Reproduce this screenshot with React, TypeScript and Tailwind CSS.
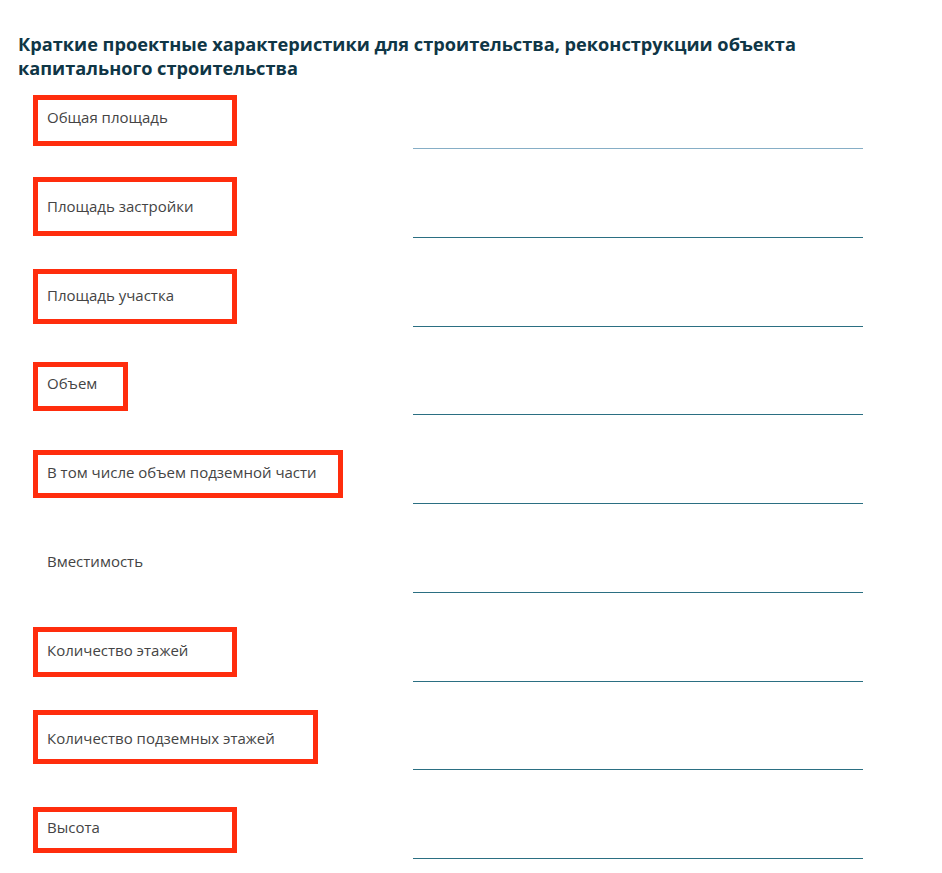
const ROWS = [
  { label: 'Общая площадь', box: 'top-[3px] h-[51px] w-[204px]', line: 'border-[#86aec6]' },
  { label: 'Площадь застройки', box: 'top-[-4px] h-[59px] w-[204px]', line: 'border-[#2b6f82]' },
  { label: 'Площадь участка', box: 'top-[-1px] h-[55px] w-[204px]', line: 'border-[#2b6f82]' },
  { label: 'Объем', box: 'top-[4px] h-[49px] w-[95px]', line: 'border-[#2b6f82]' },
  { label: 'В том числе объем подземной части', box: 'top-[3px] h-[48px] w-[310px]', line: 'border-[#2b6f82]' },
  { label: 'Вместимость', box: '', line: 'border-[#2b6f82]' },
  { label: 'Количество этажей', box: 'top-[2px] h-[50px] w-[204px]', line: 'border-[#2b6f82]' },
  { label: 'Количество подземных этажей', box: 'top-[-3px] h-[54px] w-[285px]', line: 'border-[#2b6f82]' },
  { label: 'Высота', box: 'top-[5px] h-[46px] w-[204px]', line: 'border-[#2b6f82]' },
]

export default function App() {
  return (
    <div className="h-[873px] w-[942px] overflow-hidden bg-white pl-[18px] pt-[32px] font-['Open_Sans',sans-serif]">
      <h2 className="w-[800px] text-[18.2px] font-bold leading-[24px] text-[#0f3646]">
        Краткие проектные характеристики для строительства, реконструкции объекта капитального строительства
      </h2>

      <div className="mt-[12px]">
        {ROWS.map((row) => (
          <div key={row.label} className="relative flex h-[88.75px]">
            {/* red annotation box */}
            {row.box && (
              <div
                className={`pointer-events-none absolute left-[15px] border-[5px] border-[#ff2d0d] ${row.box}`}
              />
            )}
            <div className="w-[395px] shrink-0 pl-[29px] pt-[15px] text-[15px] leading-[20px] text-[#444]">
              {row.label}
            </div>
            <div className={`h-[57px] w-[450px] border-b ${row.line}`} />
          </div>
        ))}
      </div>
    </div>
  )
}
